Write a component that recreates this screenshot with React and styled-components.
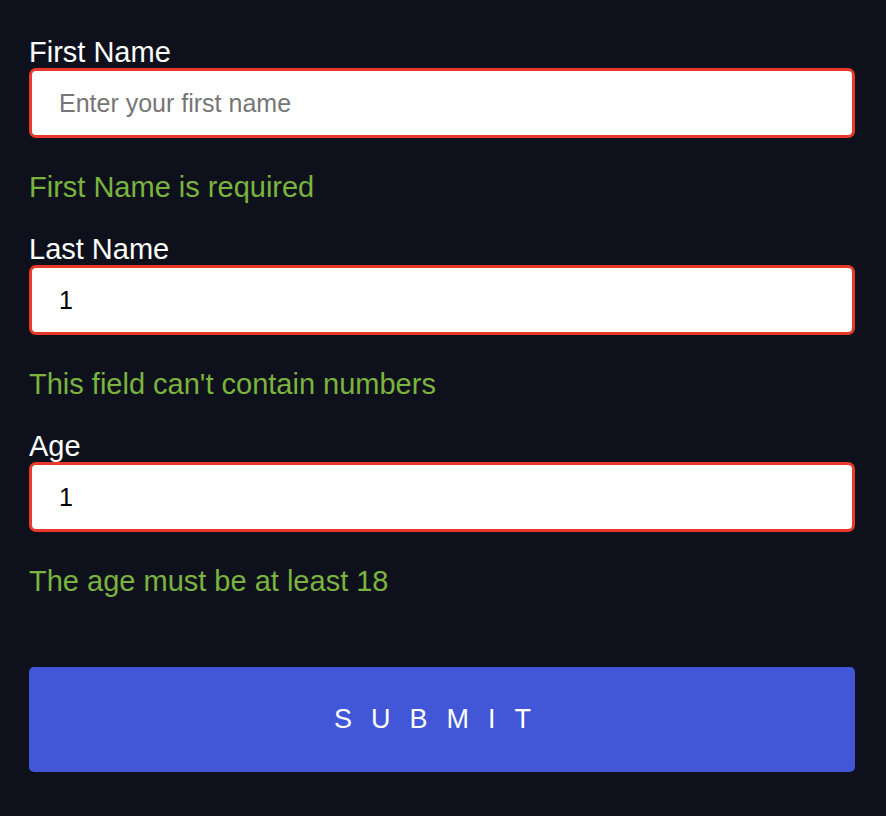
import React, { useState } from 'react';
import styled, { createGlobalStyle } from 'styled-components';

const GlobalStyle = createGlobalStyle`
  html, body {
    margin: 0;
    padding: 0;
    background-color: #0e111b;
  }

  body {
    font-family: "Liberation Sans", Arial, sans-serif;
    min-height: 816px;
  }
`;

const fields = [
  { name: 'firstName', label: 'First Name', placeholder: 'Enter your first name', value: '', error: 'First Name is required' },
  { name: 'lastName', label: 'Last Name', placeholder: '', value: '1', error: "This field can't contain numbers" },
  { name: 'age', label: 'Age', placeholder: '', value: '1', error: 'The age must be at least 18' },
];

const App = () => {
  const [values, setValues] = useState(
    fields.reduce((acc, f) => ({ ...acc, [f.name]: f.value }), {})
  );

  const handleChange = (e) => {
    setValues({ ...values, [e.target.name]: e.target.value });
  };

  return (
    <>
      <GlobalStyle />
      <Form onSubmit={(e) => e.preventDefault()}>
        {fields.map((field) => (
          <Field key={field.name}>
            <Label htmlFor={field.name}>{field.label}</Label>
            <Input
              id={field.name}
              name={field.name}
              placeholder={field.placeholder}
              value={values[field.name]}
              onChange={handleChange}
              $invalid={!!field.error}
            />
            {field.error && <ErrorText>{field.error}</ErrorText>}
          </Field>
        ))}
        <SubmitButton type="submit">SUBMIT</SubmitButton>
      </Form>
    </>
  );
};

const Form = styled.form`
  display: flex;
  flex-direction: column;
  padding: 36px 31px 44px 29px;
`;

const Field = styled.div`
  display: flex;
  flex-direction: column;
  margin-bottom: 30px;

  &:last-of-type {
    margin-bottom: 70px;
  }
`;

const Label = styled.label`
  color: #ffffff;
  font-size: 29px;
  line-height: 32px;
`;

const Input = styled.input`
  box-sizing: border-box;
  width: 100%;
  height: 70px;
  padding: 0 27px;
  border: 3px solid ${(p) => (p.$invalid ? '#e8392b' : '#d0d4dc')};
  border-radius: 7px;
  background-color: #ffffff;
  color: #000000;
  font-family: "Liberation Sans", Arial, sans-serif;
  font-size: 25px;
  outline: none;

  &::placeholder {
    color: #767676;
  }
`;

const ErrorText = styled.p`
  margin: 33px 0 0;
  color: #7ab43f;
  font-size: 29px;
  line-height: 32px;
`;

const SubmitButton = styled.button`
  width: 100%;
  height: 105px;
  border: none;
  border-radius: 5px;
  background-color: #4157d8;
  color: #ffffff;
  font-family: "Liberation Sans", Arial, sans-serif;
  font-size: 27px;
  letter-spacing: 19px;
  cursor: pointer;
`;

export default App;
